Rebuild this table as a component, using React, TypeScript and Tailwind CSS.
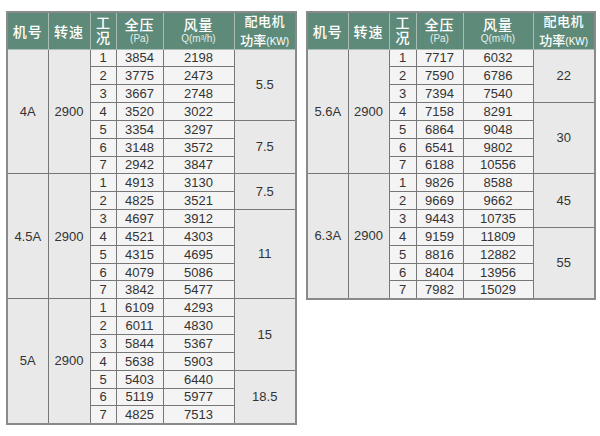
import React from "react";

type Group = {
  model: string;
  speed: string;
  rows: [string, string][];
  power: { v: string; span: number }[];
};

const left: Group[] = [
  {
    model: "4A",
    speed: "2900",
    rows: [
      ["3854", "2198"],
      ["3775", "2473"],
      ["3667", "2748"],
      ["3520", "3022"],
      ["3354", "3297"],
      ["3148", "3572"],
      ["2942", "3847"],
    ],
    power: [
      { v: "5.5", span: 4 },
      { v: "7.5", span: 3 },
    ],
  },
  {
    model: "4.5A",
    speed: "2900",
    rows: [
      ["4913", "3130"],
      ["4825", "3521"],
      ["4697", "3912"],
      ["4521", "4303"],
      ["4315", "4695"],
      ["4079", "5086"],
      ["3842", "5477"],
    ],
    power: [
      { v: "7.5", span: 2 },
      { v: "11", span: 5 },
    ],
  },
  {
    model: "5A",
    speed: "2900",
    rows: [
      ["6109", "4293"],
      ["6011", "4830"],
      ["5844", "5367"],
      ["5638", "5903"],
      ["5403", "6440"],
      ["5119", "5977"],
      ["4825", "7513"],
    ],
    power: [
      { v: "15", span: 4 },
      { v: "18.5", span: 3 },
    ],
  },
];

const right: Group[] = [
  {
    model: "5.6A",
    speed: "2900",
    rows: [
      ["7717", "6032"],
      ["7590", "6786"],
      ["7394", "7540"],
      ["7158", "8291"],
      ["6864", "9048"],
      ["6541", "9802"],
      ["6188", "10556"],
    ],
    power: [
      { v: "22", span: 3 },
      { v: "30", span: 4 },
    ],
  },
  {
    model: "6.3A",
    speed: "2900",
    rows: [
      ["9826", "8588"],
      ["9669", "9662"],
      ["9443", "10735"],
      ["9159", "11809"],
      ["8816", "12882"],
      ["8404", "13956"],
      ["7982", "15029"],
    ],
    power: [
      { v: "45", span: 3 },
      { v: "55", span: 4 },
    ],
  },
];

const cjk = { fontFamily: '"Noto Sans CJK SC", "Noto Sans", sans-serif' };
const num = { fontFamily: '"Liberation Sans", Arial, sans-serif' };

function Table({ groups, widths }: { groups: Group[]; widths: number[] }) {
  const th =
    "border border-[#a9bdb4] bg-[#5e8b79] text-white font-medium text-center align-middle p-0 leading-none";
  const merged =
    "border border-[#777] bg-[#e9e9e9] text-[#333] text-[13px] text-center align-middle p-0";
  const data =
    "border border-[#777] bg-[#f4f4f4] text-[#333] text-[13px] text-center align-middle p-0 leading-none";
  return (
    <table
      className="table-fixed border-collapse border-2 border-[#8a8a8a]"
      style={{ width: widths.reduce((a, b) => a + b, 0) }}
    >
      <colgroup>
        {widths.map((w, i) => (
          <col key={i} style={{ width: w }} />
        ))}
      </colgroup>
      <thead>
        <tr className="h-[37px]">
          <th className={th + " text-[14px] tracking-[1px]"} style={cjk}>
            机号
          </th>
          <th className={th + " text-[14px] tracking-[1px]"} style={cjk}>
            转速
          </th>
          <th className={th + " text-[14px]"} style={cjk}>
            <div className="flex justify-center">
              <div className="[writing-mode:vertical-rl] leading-[16px] tracking-[1px]">工况</div>
            </div>
          </th>
          <th className={th} style={cjk}>
            <div className="flex flex-col items-center">
              <div className="h-[16px] text-[14px] leading-[16px] tracking-[1px]">全压</div>
              <div className="h-[13px] text-[10px] leading-[13px] text-[#e6eee9]" style={num}>
                (Pa)
              </div>
            </div>
          </th>
          <th className={th} style={cjk}>
            <div className="flex flex-col items-center">
              <div className="h-[16px] text-[14px] leading-[16px] tracking-[1px]">风量</div>
              <div className="h-[13px] text-[10px] leading-[13px] text-[#e6eee9]" style={num}>
                Q(m³/h)
              </div>
            </div>
          </th>
          <th className={th} style={cjk}>
            <div className="h-[34px] flex flex-col items-center justify-center">
              <div className="text-[13px] leading-[19px] tracking-[0.5px] whitespace-nowrap">配电机</div>
              <div className="text-[13px] leading-[19px] whitespace-nowrap">
                功率<span className="text-[10px]" style={num}>(KW)</span>
              </div>
            </div>
          </th>
        </tr>
      </thead>
      <tbody style={num}>
        {groups.map((g) => {
          const powerStarts: Record<number, { v: string; span: number }> = {};
          let idx = 0;
          g.power.forEach((p) => {
            powerStarts[idx] = p;
            idx += p.span;
          });
          return g.rows.map((r, i) => (
            <tr key={g.model + i} className="h-[17.85px]">
              {i === 0 && (
                <>
                  <td rowSpan={7} className={merged}>
                    {g.model}
                  </td>
                  <td rowSpan={7} className={merged}>
                    {g.speed}
                  </td>
                </>
              )}
              <td className={data}>{i + 1}</td>
              <td className={data}>{r[0]}</td>
              <td className={data}>{r[1]}</td>
              {powerStarts[i] && (
                <td rowSpan={powerStarts[i].span} className={merged}>
                  {powerStarts[i].v}
                </td>
              )}
            </tr>
          ));
        })}
      </tbody>
    </table>
  );
}

export default function App() {
  return (
    <div className="w-[600px] h-[436px] bg-white flex items-start gap-[9px] pl-[6px] pt-[11px]">
      <Table groups={left} widths={[41, 42, 26, 47, 71, 62]} />
      <Table groups={right} widths={[41, 41, 27, 47, 70, 62]} />
    </div>
  );
}
